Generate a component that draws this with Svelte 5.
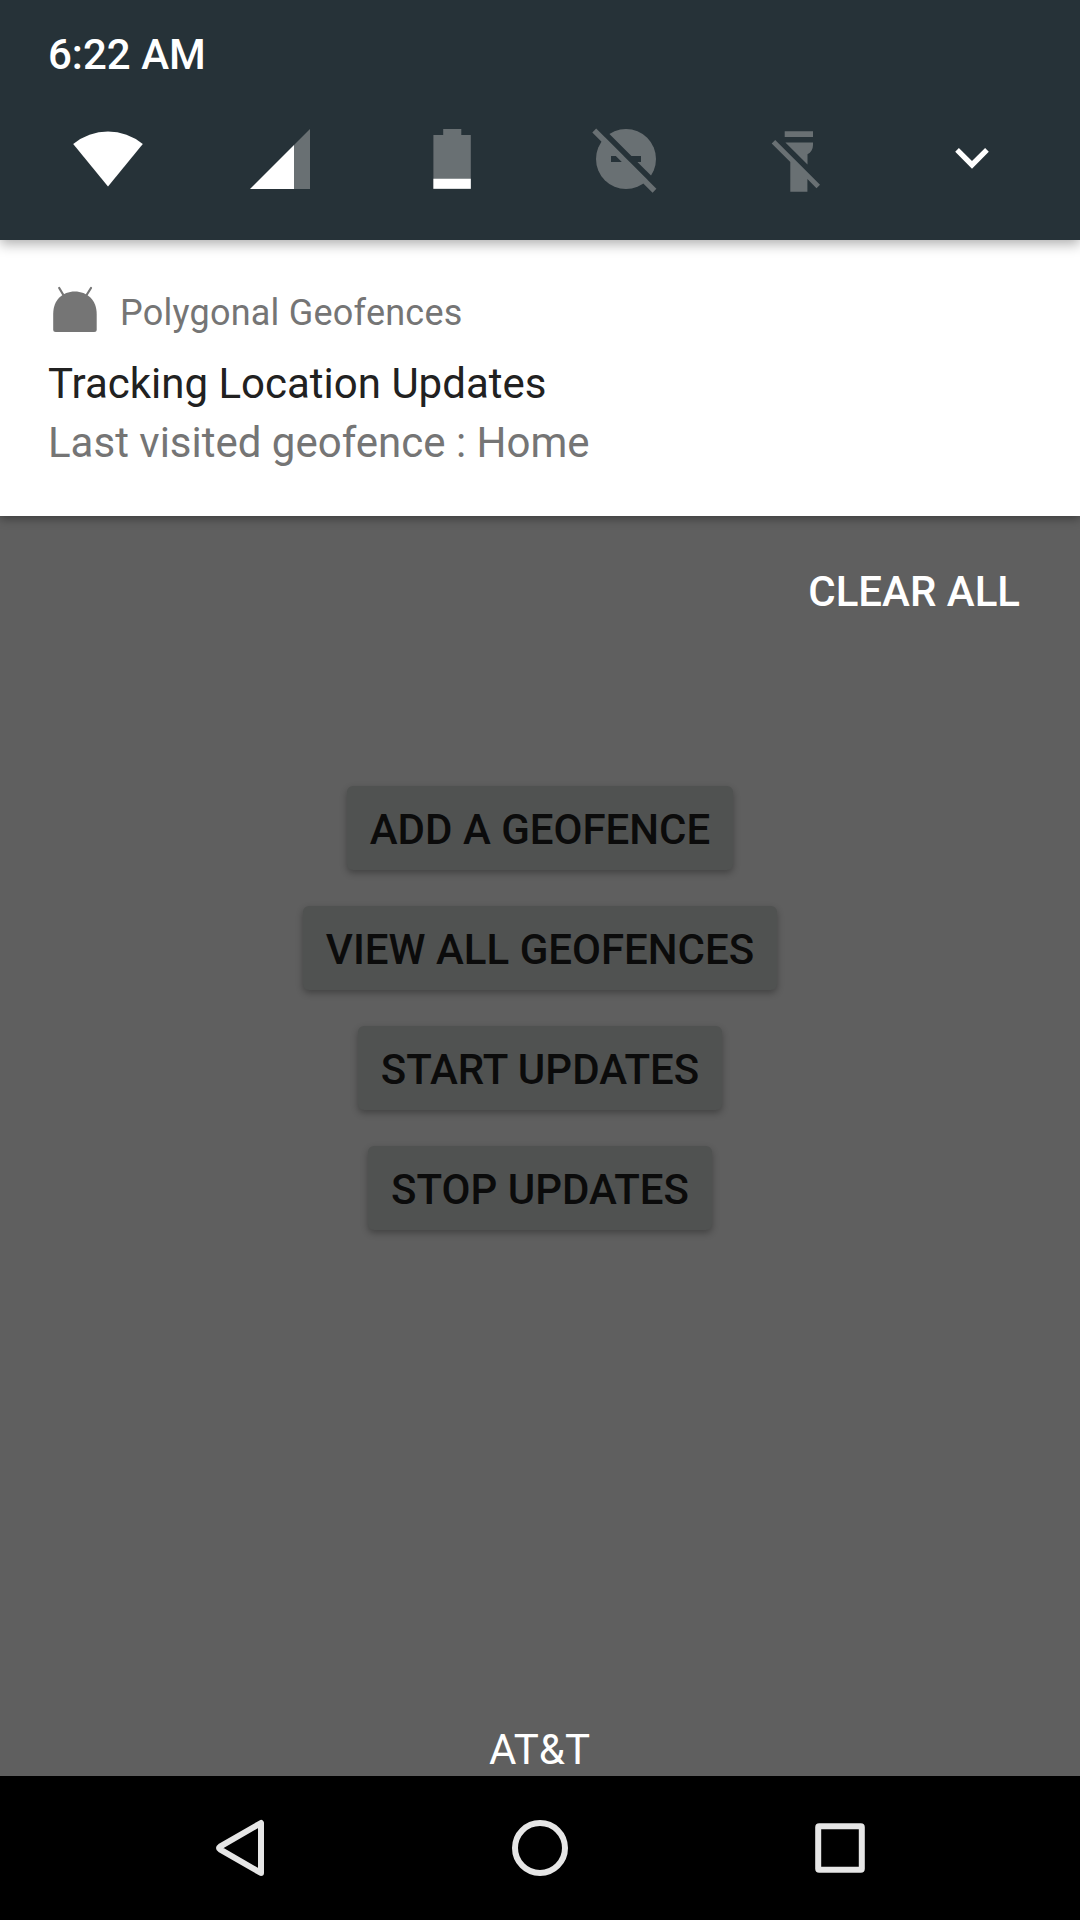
<script>
  const actions = ['Add a geofence', 'View all geofences', 'Start updates', 'Stop updates'];
</script>

<div class="screen">
  <header class="status">
    <div class="time">6:22 AM</div>
    <div class="tiles">
      <svg viewBox="0 0 72 72" aria-label="Wi-Fi">
        <path class="on" d="M36 63.6 1.2 21A55 55 0 0 1 70.8 21Z" />
      </svg>
      <svg viewBox="0 0 72 72" aria-label="Mobile signal">
        <path class="off" d="M66 6V66H50V22Z" />
        <path class="on" d="M6 66 50 22V66Z" />
      </svg>
      <svg viewBox="0 0 72 72" aria-label="Battery">
        <path class="off" d="M27.2 6H45.3V12H54.8V66H17.4V12H27.2Z" />
        <path class="on" d="M17.4 55.7H54.8V65.7H17.4Z" />
      </svg>
      <svg viewBox="0 0 72 72" aria-label="Do not disturb off">
        <mask id="dnd">
          <rect width="72" height="72" fill="#fff" />
          <rect x="21" y="33" width="30" height="6" fill="#000" />
          <path d="M0 -.4 72 71.6V63.6L0 -8.4Z" fill="#000" />
        </mask>
        <circle class="off" cx="36" cy="36" r="30" mask="url(#dnd)" />
        <path class="off" d="M2.3 9.4 6.2 5.6 66.4 65.8 62.6 69.7Z" />
      </svg>
      <svg viewBox="0 0 72 72" aria-label="Flashlight off">
        <path class="off" d="M22.7 8.3H51V14H22.7ZM23.4 19.6H51V22C51 26 49 29.5 45.5 31.3V41.6Z" />
        <path class="off" d="M9.7 20.5 13.2 17 58 61.7 54.5 65.2 45.4 56.1V68.7H28.3V39.1Z" />
      </svg>
      <svg viewBox="0 0 72 72" aria-label="Expand">
        <path class="on" d="M19.2 28.8 22.9 25 36 37.9 49.1 25 52.8 28.8 36 45.8Z" />
      </svg>
    </div>
  </header>

  <section class="notification">
    <div class="app">
      <svg viewBox="0 0 54 54" aria-hidden="true">
        <path d="M5.2 31C5.2 17 14.5 8.5 26.8 8.5S48.7 17 48.7 31V46.5Q48.7 49 46.2 49H7.7Q5.2 49 5.2 46.5Z" />
        <path class="antenna" d="M11.2 5 15.4 12M43 5 38.6 12" />
      </svg>
      <span>Polygonal Geofences</span>
    </div>
    <div class="title">Tracking Location Updates</div>
    <div class="detail">Last visited geofence : Home</div>
  </section>

  <main>
    <button class="clear">Clear all</button>
    <div class="actions">
      {#each actions as action}
        <button class="action">{action}</button>
      {/each}
    </div>
    <div class="carrier">AT&amp;T</div>
  </main>

  <nav>
    <svg viewBox="0 0 72 72" aria-label="Back">
      <path d="M57 11V61L16 37.3Q14 36 16 34.7Z" />
    </svg>
    <svg viewBox="0 0 72 72" aria-label="Home">
      <circle cx="36" cy="36" r="25" />
    </svg>
    <svg viewBox="0 0 72 72" aria-label="Overview">
      <rect x="14.2" y="14.2" width="43.6" height="43.6" rx="1" />
    </svg>
  </nav>
</div>

<style>
  :global(body) {
    margin: 0;
  }
  .screen {
    display: flex;
    flex-direction: column;
    width: 1080px;
    height: 1920px;
    overflow: hidden;
    background: #5f5f5f;
    font: 400 42px/50px Roboto, sans-serif;
  }
  svg {
    display: block;
    width: 72px;
    height: 72px;
    overflow: visible;
  }
  .status {
    z-index: 2;
    box-sizing: border-box;
    height: 240px;
    padding: 30px 48px 0;
    background: #263238;
    box-shadow: 0 4px 12px rgba(0, 0, 0, 0.32);
    color: #fff;
  }
  .time {
    font-weight: 500;
  }
  .tiles {
    display: grid;
    grid-template-columns: 172px 172px 174px 172px 174px 72px;
    margin: 43px 0 0 24px;
  }
  .on {
    fill: #fff;
  }
  .off {
    fill: #697073;
  }
  .notification {
    z-index: 1;
    box-sizing: border-box;
    height: 276px;
    padding: 43px 48px 0;
    background: #fff;
    box-shadow: 0 3px 9px rgba(0, 0, 0, 0.35);
    color: #757575;
  }
  .app {
    display: flex;
    gap: 18px;
    height: 54px;
    font-size: 36px;
    letter-spacing: 0.23px;
    line-height: 60px;
  }
  .app svg {
    width: 54px;
    height: 54px;
    fill: #757575;
  }
  .antenna {
    stroke: #757575;
    stroke-width: 2.2;
    stroke-linecap: round;
  }
  .title {
    margin-top: 22px;
    color: #212121;
  }
  .detail {
    margin-top: 9px;
  }
  main {
    display: flex;
    flex: 1;
    flex-direction: column;
  }
  button {
    border: 0;
    background: none;
    font: inherit;
    font-weight: 500;
    text-transform: uppercase;
  }
  .clear {
    align-self: flex-end;
    margin: 51px 60px 0 0;
    padding: 0;
    color: #fff;
  }
  .actions {
    display: flex;
    flex-direction: column;
    align-items: center;
    gap: 35.5px;
    margin-top: 168.5px;
  }
  .action {
    height: 84.5px;
    padding: 4.5px 23px 0;
    border-radius: 6px;
    background: #505251;
    box-shadow: 0 3px 7px rgba(0, 0, 0, 0.3);
    color: #0b0b0b;
  }
  .carrier {
    margin: auto 1px 1px 0;
    color: #fff;
    text-align: center;
  }
  nav {
    display: flex;
    justify-content: center;
    align-items: center;
    gap: 228px;
    height: 144px;
    background: #000;
  }
  nav svg {
    fill: none;
    stroke: #e6e6e6;
    stroke-width: 6;
    stroke-linejoin: round;
  }
</style>
